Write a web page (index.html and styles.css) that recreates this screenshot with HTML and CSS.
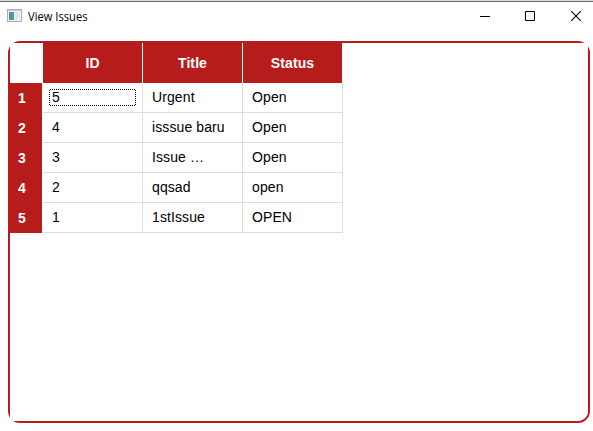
FILE: index.html
```
<!DOCTYPE html>
<html lang="en">
<head>
<meta charset="utf-8">
<title>View Issues</title>
<link rel="stylesheet" href="styles.css">
</head>
<body>
<div class="window">
  <header class="titlebar">
    <svg class="app-icon" width="15" height="13" viewBox="0 0 15 13" shape-rendering="crispEdges">
      <defs><linearGradient id="pane" x1="0" y1="0" x2="1" y2="1"><stop offset="0" stop-color="#5b86b8"/><stop offset="1" stop-color="#4fa878"/></linearGradient></defs>
      <rect width="15" height="13" fill="#a9adb6"/>
      <rect x="1" y="1" width="13" height="1" fill="#c9ccd4"/>
      <rect x="1" y="2" width="13" height="10" fill="#f1f2f5"/>
      <rect x="2" y="3" width="5" height="8" fill="url(#pane)"/>
      <rect x="8" y="3" width="3" height="8" fill="#dfe2e8"/>
      <rect x="12" y="3" width="1" height="8" fill="#dfe2e8"/>
    </svg>
    <span class="caption"><span class="caption-text">View Issues</span></span>
    <div class="controls">
      <svg width="10" height="10" viewBox="0 0 10 10"><path d="M0 5.5H10" stroke="#000"/></svg>
      <svg width="10" height="10" viewBox="0 0 10 10"><path d="M.5 .5H9.5V9.5H.5Z" fill="none" stroke="#000"/></svg>
      <svg class="close" width="10" height="10" viewBox="0 0 10 10"><path d="M0 0L10 10M10 0L0 10" stroke="#000" stroke-width="1.1"/></svg>
    </div>
  </header>
  <main class="frame">
    <div class="viewport">
      <table class="issues">
        <thead><tr><th class="corner"></th><th>ID</th><th>Title</th><th>Status</th></tr></thead>
        <tbody>
          <tr><th>1</th><td class="focused">5</td><td>Urgent</td><td>Open</td></tr>
          <tr><th>2</th><td>4</td><td>isssue baru</td><td>Open</td></tr>
          <tr><th>3</th><td>3</td><td>Issue …</td><td>Open</td></tr>
          <tr><th>4</th><td>2</td><td>qqsad</td><td>open</td></tr>
          <tr><th>5</th><td>1</td><td>1stIssue</td><td>OPEN</td></tr>
        </tbody>
      </table>
    </div>
  </main>
</div>
</body>
</html>
```
FILE: styles.css
```
* { box-sizing: border-box; }
body { margin: 0; background: #fff; overflow: hidden; }
.window {
  width: 593px;
  height: 431px;
  border-top: 1px solid #d9d9d9;
  font-family: "Liberation Sans", Arial, sans-serif;
}
.titlebar {
  display: flex;
  align-items: center;
  height: 31px;
  padding: 0 12px 0 7px;
  border-top: 1px solid #6e6e6e;
}
.app-icon { margin-top: -3px; }
.caption {
  flex: 1;
  margin-left: 6px;
  font: 12px/16px "Open Sans", "Noto Sans", sans-serif;
  color: #000;
}
.caption-text {
  display: inline-block;
  transform: scaleX(.93);
  transform-origin: left;
}
.controls { display: flex; gap: 35px; margin-top: -2px; }
.controls svg { display: block; }
.controls .close { margin-left: 1px; }
.frame {
  width: 582px;
  height: 382px;
  margin: 9px 0 0 8px;
  border: 2px solid #b71c1c;
  border-radius: 12px;
}
.viewport {
  width: 578px;
  height: 378px;
  background: #fff;
  border-bottom-right-radius: 10px;
}
.issues {
  table-layout: fixed;
  width: 335px;
  margin-left: -2px;
  border-collapse: separate;
  border-spacing: 0;
  font-size: 14px;
  line-height: 16px;
  color: #000;
}
.issues th, .issues td { padding: 0; }
.issues th { color: #fff; background: #b71c1c; font-weight: 700; }
.issues thead th {
  width: 100px;
  height: 40px;
  border-right: 1px solid #fff;
  letter-spacing: .1px;
}
.issues thead .corner { width: 35px; background: #fff; background-clip: padding-box; border-left: 2px solid transparent; }
.issues tbody th {
  height: 30px;
  padding: 0 0 1px 10px;
  text-align: left;
  border-right: 1px solid #fff;
}
.issues td {
  height: 30px;
  padding: 0 0 1px 9px;
  border-right: 1px solid #dcdcdc;
  border-bottom: 1px solid #dcdcdc;
  letter-spacing: .1px;
}
.issues .focused {
  background:
    repeating-linear-gradient(90deg, #000 0 1px, transparent 1px 2px) 7px 6px / 86px 1px no-repeat,
    repeating-linear-gradient(90deg, #000 0 1px, transparent 1px 2px) 7px 22px / 86px 1px no-repeat,
    repeating-linear-gradient(#000 0 1px, transparent 1px 2px) 6px 7px / 1px 15px no-repeat,
    repeating-linear-gradient(#000 0 1px, transparent 1px 2px) 92px 7px / 1px 15px no-repeat;
}
```
